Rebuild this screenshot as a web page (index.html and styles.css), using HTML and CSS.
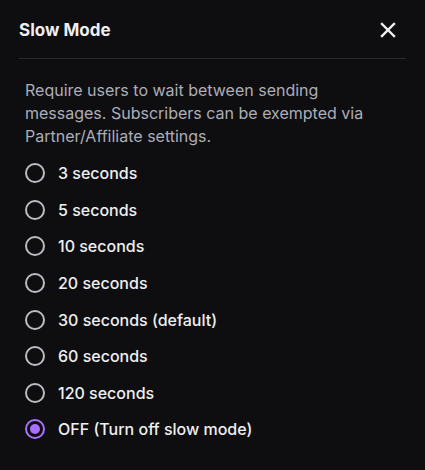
FILE: index.html
```html
<!DOCTYPE html>
<html>
<head>
<meta charset="utf-8">
<link rel="stylesheet" href="styles.css">
</head>
<body>
<div class="panel">
  <div class="header">
    <h2 class="title">Slow Mode</h2>
    <button class="close" aria-label="Close">
      <svg width="16" height="16" viewBox="0 0 16 16"><path d="M2 2 L14 14 M14 2 L2 14" stroke="#efeff1" stroke-width="2.4" stroke-linecap="square" fill="none"/></svg>
    </button>
  </div>
  <div class="divider"></div>
  <div class="body">
    <p class="desc">Require users to wait between sending messages. Subscribers can be exempted via Partner/Affiliate settings.</p>
    <ul class="options">
      <li class="option"><span class="radio"></span><span class="label">3 seconds</span></li>
      <li class="option"><span class="radio"></span><span class="label">5 seconds</span></li>
      <li class="option"><span class="radio"></span><span class="label">10 seconds</span></li>
      <li class="option"><span class="radio"></span><span class="label">20 seconds</span></li>
      <li class="option"><span class="radio"></span><span class="label">30 seconds (default)</span></li>
      <li class="option"><span class="radio"></span><span class="label">60 seconds</span></li>
      <li class="option"><span class="radio"></span><span class="label">120 seconds</span></li>
      <li class="option"><span class="radio checked"></span><span class="label">OFF (Turn off slow mode)</span></li>
    </ul>
  </div>
</div>
</body>
</html>
```
FILE: styles.css
```css
html, body {
  margin: 0;
  padding: 0;
  background: #0e0e10;
}
body {
  width: 425px;
  height: 470px;
  font-family: Inter, "Noto Sans", sans-serif;
  color: #efeff1;
}
.panel {
  padding: 0 19px;
}
.header {
  display: flex;
  align-items: center;
  justify-content: space-between;
  height: 58px;
}
.title {
  margin: 0;
  font-size: 17px;
  font-weight: 700;
  color: #efeff1;
  padding-top: 1px;
}
.close {
  background: none;
  border: 0;
  padding: 0;
  margin-right: 10px;
  width: 16px;
  height: 16px;
  display: flex;
  margin-top: 1px;
}
.divider {
  height: 1px;
  background: #2a2a2e;
}
.body {
  padding: 0 6px;
}
.desc {
  margin: 20px 0 0;
  max-width: 360px;
  font-size: 16px;
  line-height: 23px;
  color: #adadb8;
}
.options {
  list-style: none;
  margin: 7px 0 0;
  padding: 0;
}
.option {
  display: flex;
  align-items: center;
  height: 36.57px;
  font-size: 16px;
  font-weight: 500;
}
.radio {
  box-sizing: border-box;
  width: 20px;
  height: 20px;
  border: 2px solid #bcbcc4;
  border-radius: 50%;
  margin-right: 13px;
  flex: none;
  display: flex;
  align-items: center;
  justify-content: center;
}
.radio.checked {
  border-color: #a970ff;
}
.radio.checked::after {
  content: "";
  width: 10px;
  height: 10px;
  border-radius: 50%;
  background: #a970ff;
}
```
